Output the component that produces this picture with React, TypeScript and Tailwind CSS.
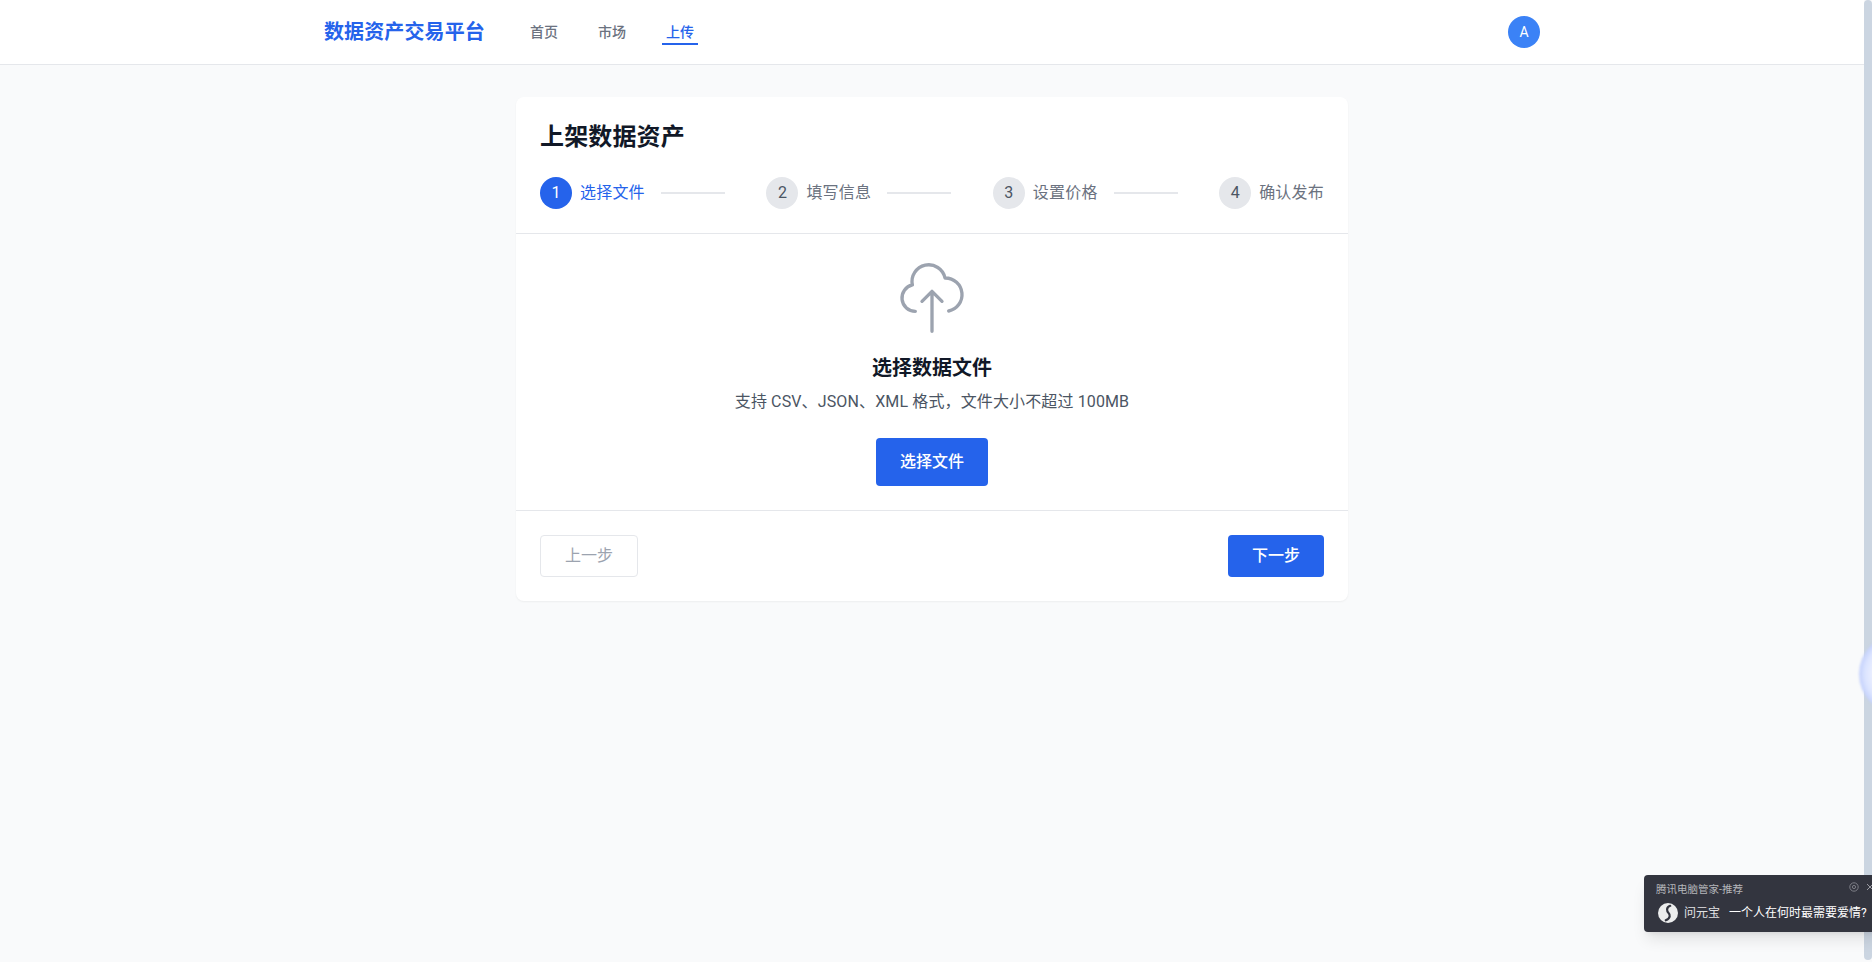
import React from "react";

const steps = ["选择文件", "填写信息", "设置价格", "确认发布"];

export default function App() {
  return (
    <div className="relative flex h-screen overflow-hidden bg-[#f9fafb] font-['Roboto','Noto_Sans_CJK_SC',sans-serif]">
      <div className="flex min-w-0 flex-1 flex-col">
        <header className="border-b border-[#e5e7eb] bg-white">
          <div className="mx-auto flex h-16 w-full max-w-7xl items-center justify-between px-8">
            <div className="flex items-center">
              <span className="text-xl font-bold tracking-[0.006em] text-[#2563eb]">数据资产交易平台</span>
              <nav className="ml-[41px] flex gap-8 text-sm font-medium text-[#6b7280]">
                <a className="mt-[3px] border-b-2 border-transparent px-1 pb-px">首页</a>
                <a className="mt-[3px] border-b-2 border-transparent px-1 pb-px">市场</a>
                <a className="mt-[3px] border-b-2 border-[#2563eb] px-1 pb-px text-[#2563eb]">上传</a>
              </nav>
            </div>
            <div className="flex h-8 w-8 items-center justify-center rounded-full bg-[#3b82f6] text-sm text-white">A</div>
          </div>
        </header>

        <main className="mx-auto w-full max-w-4xl px-8 py-8">
          <div className="rounded-lg bg-white shadow-[0_1px_2px_0_rgba(0,0,0,0.05)]">
            <div className="border-b border-[#e5e7eb] p-6">
              <h1 className="mb-6 text-2xl font-bold tracking-[0.006em] text-[#111827]">上架数据资产</h1>
              <div className="flex items-center justify-between">
                {steps.map((s, i) => (
                  <div key={s} className="flex items-center">
                    <div
                      className={
                        i === 0
                          ? "flex h-8 w-8 items-center justify-center rounded-full bg-[#2563eb] text-white"
                          : "flex h-8 w-8 items-center justify-center rounded-full bg-[#e5e7eb] text-[#4b5563]"
                      }
                    >
                      {i + 1}
                    </div>
                    <span className={i === 0 ? "ml-2 tracking-[0.0125em] text-[#2563eb]" : "ml-2 tracking-[0.0125em] text-[#6b7280]"}>{s}</span>
                    {i < 3 && <div className="ml-4 h-0.5 w-16 bg-[#e5e7eb]" />}
                  </div>
                ))}
              </div>
            </div>

            <div className="flex flex-col items-center border-b border-[#e5e7eb] px-6 pt-6 pb-6">
              <svg className="h-20 w-20 text-[#9ca3af]" fill="none" viewBox="0 0 24 24" stroke="currentColor" strokeWidth={1} strokeLinecap="round" strokeLinejoin="round">
                <path d="M7 16a4 4 0 01-.88-7.903A5 5 0 1115.9 6L16 6a5 5 0 011 9.9M15 13l-3-3m0 0l-3 3m3-3v12" />
              </svg>
              <h2 className="mt-4 text-xl font-semibold text-[#111827]">选择数据文件</h2>
              <p className="mt-2 tracking-[0.13px] text-[#4b5563]">支持 CSV、JSON、XML 格式，文件大小不超过 100MB</p>
              <button className="mt-6 rounded bg-[#2563eb] px-6 py-3 font-medium text-white">选择文件</button>
            </div>

            <div className="flex justify-between p-6">
              <button className="rounded border border-[#e5e7eb] px-6 py-2 text-[#9ca3af]">上一步</button>
              <button className="rounded bg-[#2563eb] px-6 py-2 font-medium text-white">下一步</button>
            </div>
          </div>
        </main>
      </div>

      <div className="mb-[2px] w-2 rounded-full bg-[#cbd5e1]" />

      <div className="absolute left-[1859px] top-[634px] h-[80px] w-[80px] rounded-full bg-[radial-gradient(circle_closest-side,#f3f5ff_55%,#dbe4ff_85%,#c3d0fb_100%)] blur-[1px]" />

      <div className="absolute left-[1644px] top-[875px] h-[57px] w-[240px] rounded-[4px] bg-[#33353f] text-white shadow-lg">
        <div className="pl-3 pt-2 text-[10.5px] leading-[14px] text-[#b4b5ba]">腾讯电脑管家-推荐</div>
        <div className="mt-[6px] flex items-center pl-[14px]">
          <svg width="20" height="20" viewBox="0 0 18 18">
            <circle cx="9" cy="9" r="9" fill="#eceded" />
            <path d="M11 2.5C7 4 8 7.5 9.5 9s2 4.5-2.5 6.5" fill="none" stroke="#33353f" strokeWidth="2" strokeLinecap="round" />
          </svg>
          <span className="ml-[6px] text-xs text-[#e2e2e4]">问元宝</span>
          <span className="ml-[9px] whitespace-nowrap text-xs text-white">一个人在何时最需要爱情?</span>
        </div>
        <svg className="absolute left-[205px] top-[7px] text-[#7d7e86]" width="10" height="10" viewBox="0 0 10 10" fill="none" stroke="currentColor">
          <circle cx="5" cy="5" r="4.2" />
          <circle cx="5" cy="5" r="1.6" />
        </svg>
        <svg className="absolute left-[222px] top-[8px] text-[#9a9ba2]" width="8" height="8" viewBox="0 0 8 8" fill="none" stroke="currentColor">
          <path d="M1 1l6 6M7 1l-6 6" />
        </svg>
      </div>
    </div>
  );
}
